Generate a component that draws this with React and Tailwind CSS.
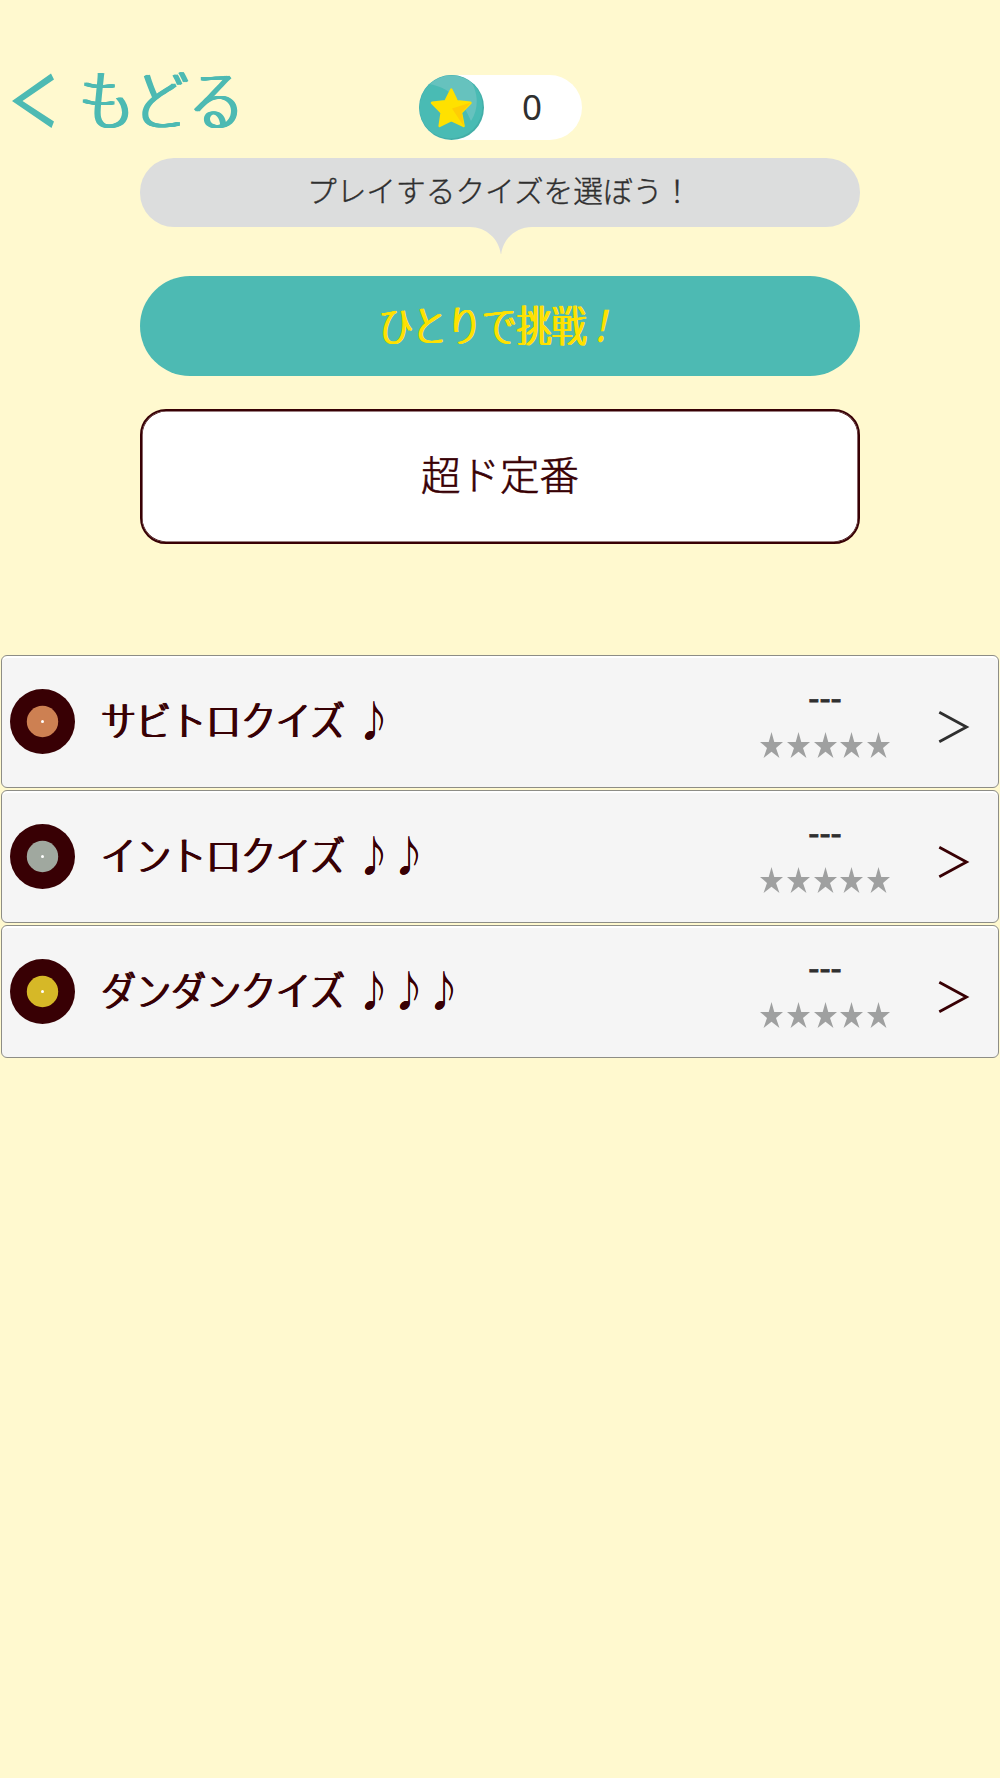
import React from 'react';

const STAR = '12,0 14.9,9.9 24,9.9 16.7,15.9 20.3,26 12,19.8 3.7,26 7.3,15.9 0,9.9 9.1,9.9';

const quizzes = [
  { title: 'サビトロクイズ', notes: '♪', label: 'fill-[#cd8052]', arrow: 'stroke-[#2f2f2f]' },
  { title: 'イントロクイズ', notes: '♪♪', label: 'fill-[#a0a89f]', arrow: 'stroke-[#380004]' },
  { title: 'ダンダンクイズ', notes: '♪♪♪', label: 'fill-[#d6b827]', arrow: 'stroke-[#380004]' },
];

function Coin() {
  return (
    <svg className="size-[65px] shrink-0" viewBox="0 0 65 65">
      <defs>
        <clipPath id="coin">
          <circle cx="32.5" cy="32.5" r="32" />
        </clipPath>
      </defs>
      <circle cx="32.5" cy="32.5" r="32.5" fill="#43aea8" />
      <g clipPath="url(#coin)">
        <circle cx="31.5" cy="31.5" r="32" fill="#49bbb4" />
        <path d="M8 9 C24 10 42 21 52 46 C60 34 60 16 50 4 L30 -4 Z" fill="#66c2be" />
      </g>
      <path
        d="M32.3 14.5 L38 26.3 L51.5 27.8 L42 37.6 L44.6 51 L32.3 45.2 L20.6 51 L22.6 37.6 L13 27.8 L26.4 26.3 Z"
        fill="#ffe100"
        stroke="#ffe100"
        strokeWidth="2.4"
        strokeLinejoin="round"
      />
      <path d="M52 27.6 L33 33.5 L45 51.6 L42.6 37.6 Z" fill="#ffcd05" />
    </svg>
  );
}

function Disc({ label }) {
  return (
    <svg className="size-[65px] shrink-0" viewBox="0 0 65 65">
      <circle cx="32.5" cy="32.5" r="32.5" fill="#380004" />
      <circle cx="32.5" cy="32.5" r="15.7" className={label} />
      <circle cx="32.5" cy="32.5" r="1.5" fill="#fff" />
    </svg>
  );
}

function QuizRow({ quiz }) {
  return (
    <button className="flex h-[133px] w-full items-center rounded-[6px] border border-[#8d8d86] bg-[#f5f5f5] pl-[8px] text-left shadow-[inset_0_2px_0_#ffffff]">
      <Disc label={quiz.label} />
      <span className="mb-[8px] ml-[26px] flex w-[640px] origin-left scale-x-[0.854] items-center whitespace-nowrap text-[41px] leading-[60px] font-light text-[#380004] [text-shadow:1.4px_0_0_#380004,-1.4px_0_0_#380004,0.7px_0_0_#380004]">
        {quiz.title}
        <span className="ml-[13px] [text-shadow:0.5px_0_0_#380004]">{quiz.notes}</span>
      </span>
      <span className="ml-[18px] flex w-[132px] flex-col items-center">
        <span className="-mt-[6px] font-['Liberation_Sans',sans-serif] text-[33.5px] leading-[40px] text-[#2f2f2f] [-webkit-text-stroke:0.8px_#2f2f2f]">---</span>
        <span className="mt-[13px] flex gap-[3.7px]">
          {[0, 1, 2, 3, 4].map((i) => (
            <svg key={i} className="h-[26px] w-[23px]" viewBox="0 0 24 26" preserveAspectRatio="none">
              <polygon points={STAR} fill="#9fa0a0" />
            </svg>
          ))}
        </span>
      </span>
      <svg className="mt-[10px] ml-[47px] h-[34px] w-[32px]" viewBox="0 0 32 34" fill="none">
        <path d="M1.3 2.2 L28.5 17 L1.3 31.8" strokeWidth="2.8" className={quiz.arrow} />
      </svg>
    </button>
  );
}

export default function App() {
  return (
    <main className="flex min-h-[1778px] w-[1000px] flex-col bg-[#fff9cf] pt-[60px] font-['Noto_Sans_CJK_JP',sans-serif]" lang="ja">
      <header className="flex h-[98px] items-start">
        <button className="flex h-[80px] w-[419px] items-center pl-[12px]">
          <svg className="mt-[2px] h-[56px] w-[42px]" viewBox="0 0 42 56">
            <polygon points="39,0.5 42,6.5 10.5,28 42,48.5 39.5,55 0,28" fill="#4dbab3" />
          </svg>
          <span className="mb-[8px] ml-[25px] w-[160px] origin-left scale-x-[0.84] whitespace-nowrap text-left text-[66px] leading-[80px] font-light text-[#4dbab3] [text-shadow:1px_0_0_#4dbab3,-1px_0_0_#4dbab3,2px_0_0_#4dbab3,-2px_0_0_#4dbab3]">
            もどる
          </span>
        </button>
        <div className="mt-[15px] flex h-[65px] w-[163px] rounded-full bg-white">
          <Coin />
          <span className="flex-1 pr-[2px] text-center font-['Noto_Sans',sans-serif] text-[35px] leading-[63px] font-normal text-[#2f2f2f]">0</span>
        </div>
      </header>

      <section className="mx-auto flex w-[720px] flex-col">
        <div className="flex h-[118px] flex-col items-center">
          <p className="flex h-[69px] w-full items-center justify-center rounded-[34px] bg-[#dcdddd] pr-px pb-[4px] text-[29.7px] font-light text-[#2f2f2f] [-webkit-text-stroke:0.4px_#2f2f2f]">
            プレイするクイズを選ぼう！
          </p>
          <svg className="-mt-px ml-px h-[31px] w-[62px]" viewBox="0 0 62 31">
            <path d="M0 0 H62 V1 C46 1 33 13 31.2 28 H30.8 C29 13 16 1 0 1 Z" fill="#dcdddd" />
          </svg>
        </div>
        <button className="flex h-[100px] items-center justify-center rounded-[50px] bg-[#4dbab3] pb-[7px]">
          <span className="flex scale-x-[0.81] whitespace-nowrap text-[43px] leading-[60px] font-light text-[#ffe100] [text-shadow:1.4px_0_0_#ffe100,-1.4px_0_0_#ffe100,0.7px_0_0_#ffe100]">
            ひとりで挑戦<span className="inline-block -skew-x-[14deg] font-medium [text-shadow:none]">！</span>
          </span>
        </button>
        <button className="mt-[33px] flex h-[135px] items-center justify-center rounded-[26px] border-2 border-[#380004] bg-white pb-[7px] text-[39.5px] font-light text-[#380004] shadow-[inset_0_0_0_0.6px_#380004] [-webkit-text-stroke:0.6px_#380004]">
          超ド定番
        </button>
      </section>

      <section className="mt-[111px] flex flex-col gap-[2px] px-px">
        {quizzes.map((q) => (
          <QuizRow key={q.title} quiz={q} />
        ))}
      </section>
    </main>
  );
}
